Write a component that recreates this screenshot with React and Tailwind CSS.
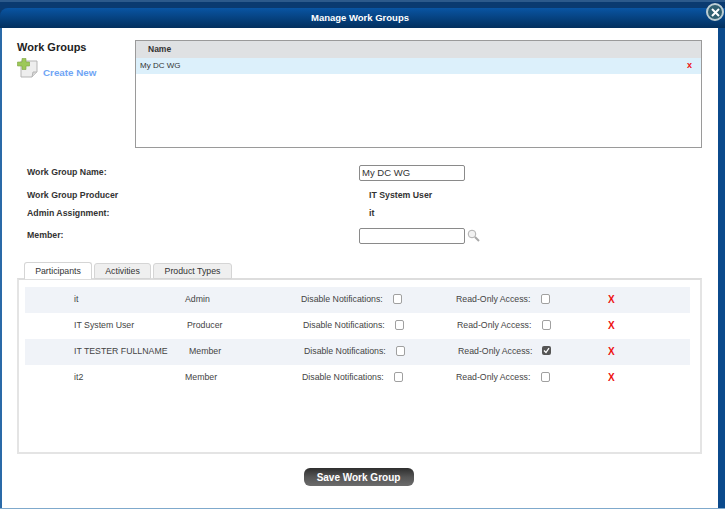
import React from "react";

const rows = [
  { name: "it", role: "Admin", roleX: 185, disX: 301, disC: 393, roX: 456, roC: 541, shade: true },
  { name: "IT System User", role: "Producer", roleX: 187, disX: 303, disC: 395, roX: 457, roC: 542 },
  { name: "IT TESTER FULLNAME", role: "Member", roleX: 189, disX: 304, disC: 396, roX: 458, roC: 542, checked: true, shade: true },
  { name: "it2", role: "Member", roleX: 185, disX: 302, disC: 394, roX: 456, roC: 541 },
];

function Box({ checked }) {
  if (checked) {
    return (
      <span className="flex h-[9px] w-[9px] items-center justify-center rounded-[2px] bg-[#555555]">
        <svg width="7" height="7" viewBox="0 0 7 7"><path d="M1 3.5 L3 5.5 L6 1.2" fill="none" stroke="#fff" strokeWidth="1.3" /></svg>
      </span>
    );
  }
  return <span className="block h-[10px] w-[9px] rounded-[2px] border border-[#a0a0a0] bg-white" />;
}

function Row({ r }) {
  return (
    <div className={`relative h-[26px] text-[8.75px] leading-[25px] text-[#444] ${r.shade ? "bg-[#f0f3f8]" : "bg-white"}`}>
      <span className="absolute left-[49px] top-0 whitespace-nowrap">{r.name}</span>
      <span className="absolute top-0 whitespace-nowrap" style={{ left: r.roleX - 25 }}>{r.role}</span>
      <span className="absolute top-0 whitespace-nowrap" style={{ left: r.disX - 25 }}>Disable Notifications:</span>
      <span className="absolute top-[7px]" style={{ left: r.disC - 25 }}><Box /></span>
      <span className="absolute top-0 whitespace-nowrap" style={{ left: r.roX - 25 }}>Read-Only Access:</span>
      <span className="absolute top-[7px]" style={{ left: r.roC - 25 }}><Box checked={r.checked} /></span>
      <span className="absolute left-[583px] top-0 text-[10px] font-bold text-[#ee1111]">X</span>
    </div>
  );
}

function Field({ label, children, h, mt = 0 }) {
  return (
    <div className="flex items-center" style={{ height: h, marginTop: mt }}>
      <span className="w-[332px] shrink-0 text-[8.75px] font-bold text-[#333]">{label}</span>
      {children}
    </div>
  );
}

export default function App() {
  return (
    <div className="relative h-[509px] w-[725px] overflow-hidden bg-white font-['Liberation_Sans',sans-serif]">
      <div className="flex h-[28px] flex-col border-t-2 border-[#2c5a8c] bg-[#0a3a70] pt-[6px]">
        <div className="flex flex-1 items-center justify-center rounded-tl-[8px] bg-gradient-to-b from-[#0a55a3] to-[#03305f] pr-[5px] text-[9.5px] font-bold text-white">
          Manage Work Groups
        </div>
      </div>
      <div className="absolute bottom-0 left-0 top-[28px] w-[2px] bg-[#2a6aa8]" />
      <div className="absolute bottom-0 right-0 top-[28px] w-[7px] bg-[#0b4a8c]" />
      <div className="absolute bottom-0 left-0 right-0 h-px bg-[#7fa9cc]" />
      <button className="absolute right-[1px] top-[3px] flex h-[18px] w-[18px] items-center justify-center rounded-full border-2 border-[#bccdd3] bg-[#2f5f70]">
        <svg width="9" height="9" viewBox="0 0 9 9"><path d="M1 1 L8 8 M8 1 L1 8" stroke="#fff" strokeWidth="2" /></svg>
      </button>

      <div className="pl-[17px] pr-[23px] pt-[12px]">
        <div className="flex">
          <div className="w-[118px] shrink-0">
            <div className="text-[11px] font-bold leading-[14px] text-[#222]">Work Groups</div>
            <div className="mt-[4px] flex items-end">
              <svg width="21" height="20" viewBox="0 0 21 20">
                <path d="M4 3 H20 V14 L15 19 H4 Z" fill="#eeeeee" stroke="#b5b5b5" />
                <path d="M15 19 L16 14 H20" fill="#d8d8d8" stroke="#b5b5b5" />
                <path d="M5 0.5 H9 V4 H12.5 V8 H9 V11.5 H5 V8 H0.5 V4 H5 Z" fill="#9dc85a" stroke="#7ea53f" strokeWidth="0.6" />
              </svg>
              <span className="ml-[5px] translate-y-[1px] text-[9.8px] font-bold leading-[12px] text-[#6fa5f5]">Create New</span>
            </div>
          </div>
          <div className="h-[108px] flex-1 border border-[#9a9a9a] bg-white">
            <div className="flex h-[17px] items-center bg-[#dfe1e3] pl-[12px] text-[8.5px] font-bold text-[#333]">Name</div>
            <div className="flex h-[16px] items-center justify-between bg-[#dcf0fb] pl-[4px] pr-[9px] text-[8px] text-[#333]">
              <span>My DC WG</span>
              <span className="text-[9px] font-bold text-[#ee1111]">x</span>
            </div>
          </div>
        </div>

        <div className="mt-[15px] pl-[10px]">
          <Field label="Work Group Name:" h={19}>
            <input readOnly value="My DC WG" className="h-[16px] w-[106px] rounded-[2px] border border-[#8a8a8a] px-[2px] text-[9.5px] text-[#333]" />
          </Field>
          <Field label="Work Group Producer" h={19} mt={4}>
            <span className="pl-[10px] text-[8.75px] font-bold text-[#333]">IT System User</span>
          </Field>
          <Field label="Admin Assignment:" h={17}>
            <span className="pl-[10px] text-[8.75px] font-bold text-[#333]">it</span>
          </Field>
          <Field label="Member:" h={27}>
            <input readOnly className="h-[16px] w-[106px] rounded-[2px] border border-[#8a8a8a] px-[2px] text-[10px]" />
            <svg className="ml-[2px]" width="13" height="13" viewBox="0 0 13 13">
              <circle cx="5" cy="5" r="3.8" fill="#f2f2f2" stroke="#b0b0b0" />
              <path d="M8 8 L12 12" stroke="#a8a8a8" strokeWidth="2" />
            </svg>
          </Field>
        </div>

        <div className="relative z-10 mt-[13px] flex h-[17px] items-end gap-[2px] pl-[7px] text-[8.75px] text-[#333]">
          <div className="flex h-[17px] w-[68px] items-center justify-center rounded-t-[3px] border border-b-0 border-[#d5d5d5] bg-white pt-px">Participants</div>
          <div className="flex h-[16px] w-[57px] items-center justify-center rounded-t-[3px] border border-[#d5d5d5] bg-[#efefef] pt-px">Activities</div>
          <div className="flex h-[16px] w-[79px] items-center justify-center rounded-t-[3px] border border-[#d5d5d5] bg-[#efefef] pt-px">Product Types</div>
        </div>
        <div className="-mt-px h-[176px] border-2 border-[#e4e4e4] border-t-[#dddddd] pl-[6px] pr-[10px] pt-[7px]">
          {rows.map((r) => <Row key={r.name} r={r} />)}
        </div>

        <div className="mt-[14px] flex justify-center">
          <button className="mr-[2px] h-[18px] w-[110px] rounded-[6px] bg-gradient-to-b from-[#2e2e2e] via-[#555555] to-[#6c6c6c] text-[10px] font-bold text-white">Save Work Group</button>
        </div>
      </div>
    </div>
  );
}
